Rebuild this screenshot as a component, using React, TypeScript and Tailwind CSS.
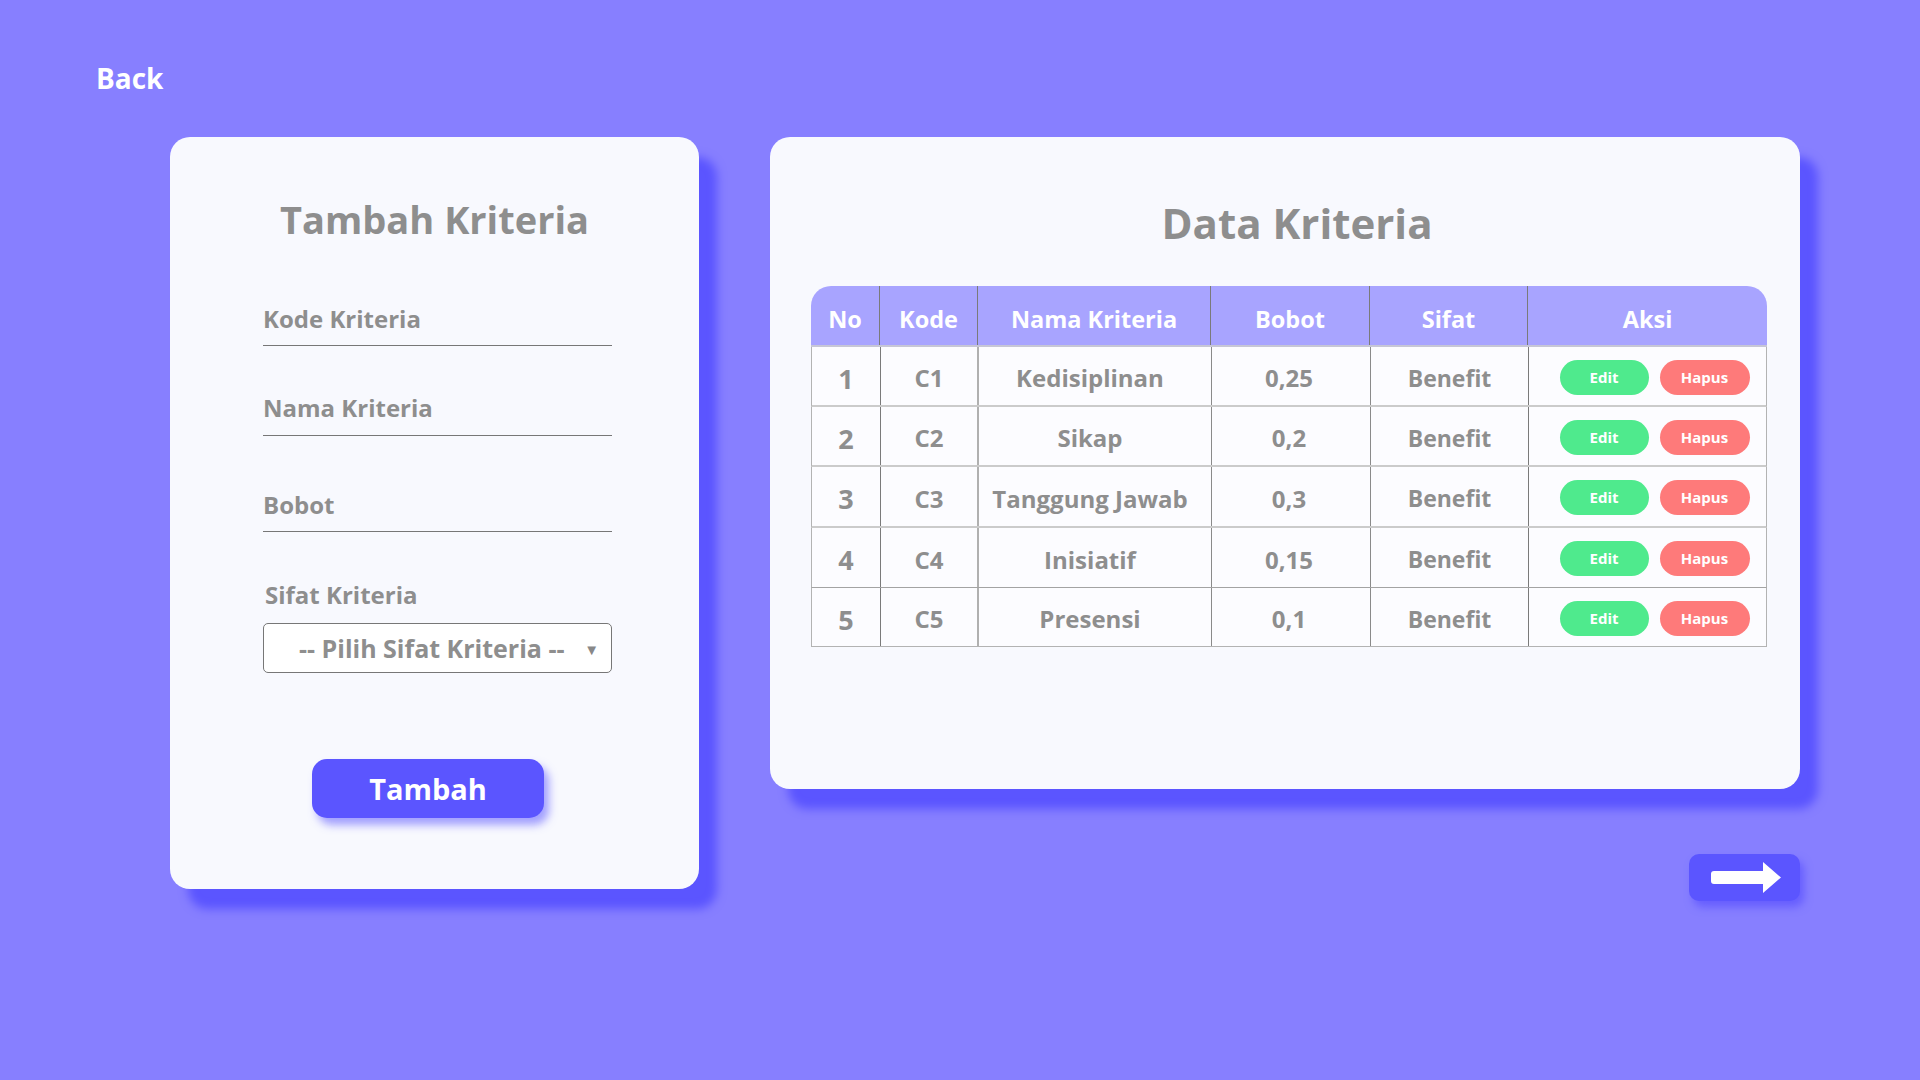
import React from 'react';

const ROWS = [
  { no: 1, kode: 'C1', nama: 'Kedisiplinan', bobot: '0,25', sifat: 'Benefit', h: 'h-[60px]', line: 'border-b-2 border-[#cbcbcb]' },
  { no: 2, kode: 'C2', nama: 'Sikap', bobot: '0,2', sifat: 'Benefit', h: 'h-[60px]', line: 'border-b-2 border-[#cbcbcb]' },
  { no: 3, kode: 'C3', nama: 'Tanggung Jawab', bobot: '0,3', sifat: 'Benefit', h: 'h-[61px]', line: 'border-b-2 border-[#cbcbcb]' },
  { no: 4, kode: 'C4', nama: 'Inisiatif', bobot: '0,15', sifat: 'Benefit', h: 'h-[60px]', line: 'border-b border-[#a3a3a3]' },
  { no: 5, kode: 'C5', nama: 'Presensi', bobot: '0,1', sifat: 'Benefit', h: 'h-[59px]', line: 'border-b border-[#b3b3b3]' },
];

const COLS = 'grid grid-cols-[69px_98px_233px_159px_158px_239px]';

function Field({ label, mt, pb }: { label: string; mt: string; pb: string }) {
  return (
    <div className={`${mt} ml-[93px] w-[349px] border-b border-[#777] ${pb}`}>
      <span className="block text-[24px] leading-none font-bold text-[#8e8e8e]">{label}</span>
    </div>
  );
}

function FormCard() {
  return (
    <div className="w-[529px] h-[752px] shrink-0 rounded-[20px] bg-[#f8f9fe] shadow-[18px_20px_10px_#5b55ff] pt-[63px] flex flex-col">
      <h1 className="text-center text-[38px] leading-none font-bold text-[#8e8e8e]">Tambah Kriteria</h1>
      <Field label="Kode Kriteria" mt="mt-[69px]" pb="pb-[14px]" />
      <Field label="Nama Kriteria" mt="mt-[50px]" pb="pb-[15px]" />
      <Field label="Bobot" mt="mt-[57px]" pb="pb-[14px]" />
      <div className="mt-[51px] ml-[95px] text-[24px] leading-none font-bold text-[#8e8e8e]">Sifat Kriteria</div>
      <div className="mt-[16px] ml-[93px] w-[349px] h-[50px] rounded-[5px] border border-[#777] bg-white flex items-center justify-between pl-[35px] pr-[12px]">
        <span className="text-[25px] leading-none font-bold text-[#8e8e8e]">-- Pilih Sifat Kriteria --</span>
        <span className="text-[15px] leading-none text-[#888] pt-[3px]">▼</span>
      </div>
      <button className="mt-[86px] ml-[142px] w-[232px] h-[59px] rounded-[15px] bg-[#5b55ff] shadow-[5px_7px_8px_rgba(91,85,255,0.55)] text-white text-[29px] leading-none font-bold">
        Tambah
      </button>
    </div>
  );
}

function DataCard() {
  return (
    <div className="w-[1030px] h-[652px] rounded-[20px] bg-[#f8f9fe] shadow-[18px_20px_10px_#5b55ff] pt-[65px]">
      <h2 className="pl-[24px] text-center text-[42px] leading-none font-bold text-[#8e8e8e]">Data Kriteria</h2>
      <div className="mt-[42px] ml-[41px] w-[956px]">
        <div className={`${COLS} h-[61px] rounded-t-[20px] bg-[#a8a4ff] border-b-2 border-[#c6c6d6] text-white text-[23.5px] leading-none font-bold`}>
          {['No', 'Kode', 'Nama Kriteria', 'Bobot', 'Sifat', 'Aksi'].map((h, i) => (
            <div key={h} className={`flex items-center justify-center pt-[9px] ${i < 5 ? 'border-r border-[#7a7a7a]' : ''}`}>
              {h}
            </div>
          ))}
        </div>
        {ROWS.map(r => (
          <div key={r.no} className={`${COLS} ${r.h} ${r.line} border-x border-x-[#b3b3b3] bg-[#fcfcff] text-[#8e8e8e] font-bold leading-none`}>
            <div className="flex items-center justify-center pt-[4px] border-r border-[#7a7a7a] text-[27px]">{r.no}</div>
            <div className="flex items-center justify-center pt-[4px] border-r-2 border-[#b0b0b0] text-[24px]">{r.kode}</div>
            <div className="flex items-center justify-center pt-[4px] pr-[10px] border-r border-[#8a8a8a] text-[24px]">{r.nama}</div>
            <div className="flex items-center justify-center pt-[4px] pr-[4px] border-r border-[#8a8a8a] text-[24px]">{r.bobot}</div>
            <div className="flex items-center justify-center pt-[4px] border-r border-[#7a7a7a] text-[23px]">{r.sifat}</div>
            <div className="flex items-center justify-center gap-[11px] pl-[12px] pt-[2px]">
              <button className="w-[89px] h-[35px] rounded-full bg-[#4fea8d] text-white text-[15px] font-bold">Edit</button>
              <button className="w-[90px] h-[35px] rounded-full bg-[#fe7a7a] text-white text-[15px] font-bold">Hapus</button>
            </div>
          </div>
        ))}
      </div>
    </div>
  );
}

export default function App() {
  return (
    <div className="min-h-screen w-full bg-[#877fff] font-['Open_Sans',sans-serif] pt-[64px]">
      <div className="pl-[96px] text-white text-[28px] leading-none font-bold">Back</div>
      <div className="mt-[45px] pl-[170px] flex items-start">
        <FormCard />
        <div className="ml-[71px] flex flex-col">
          <DataCard />
          <button className="self-end mt-[65px] w-[111px] h-[47px] rounded-[10px] bg-[#5b55ff] shadow-[4px_6px_8px_rgba(80,72,255,0.6)] flex items-center justify-center">
            <svg width="111" height="47" viewBox="0 0 111 47">
              <path d="M25 17 H74 V8 L92 23.5 L74 39 V30 H25 Q22 30 22 27 V20 Q22 17 25 17 Z" fill="#fff" />
            </svg>
          </button>
        </div>
      </div>
    </div>
  );
}
